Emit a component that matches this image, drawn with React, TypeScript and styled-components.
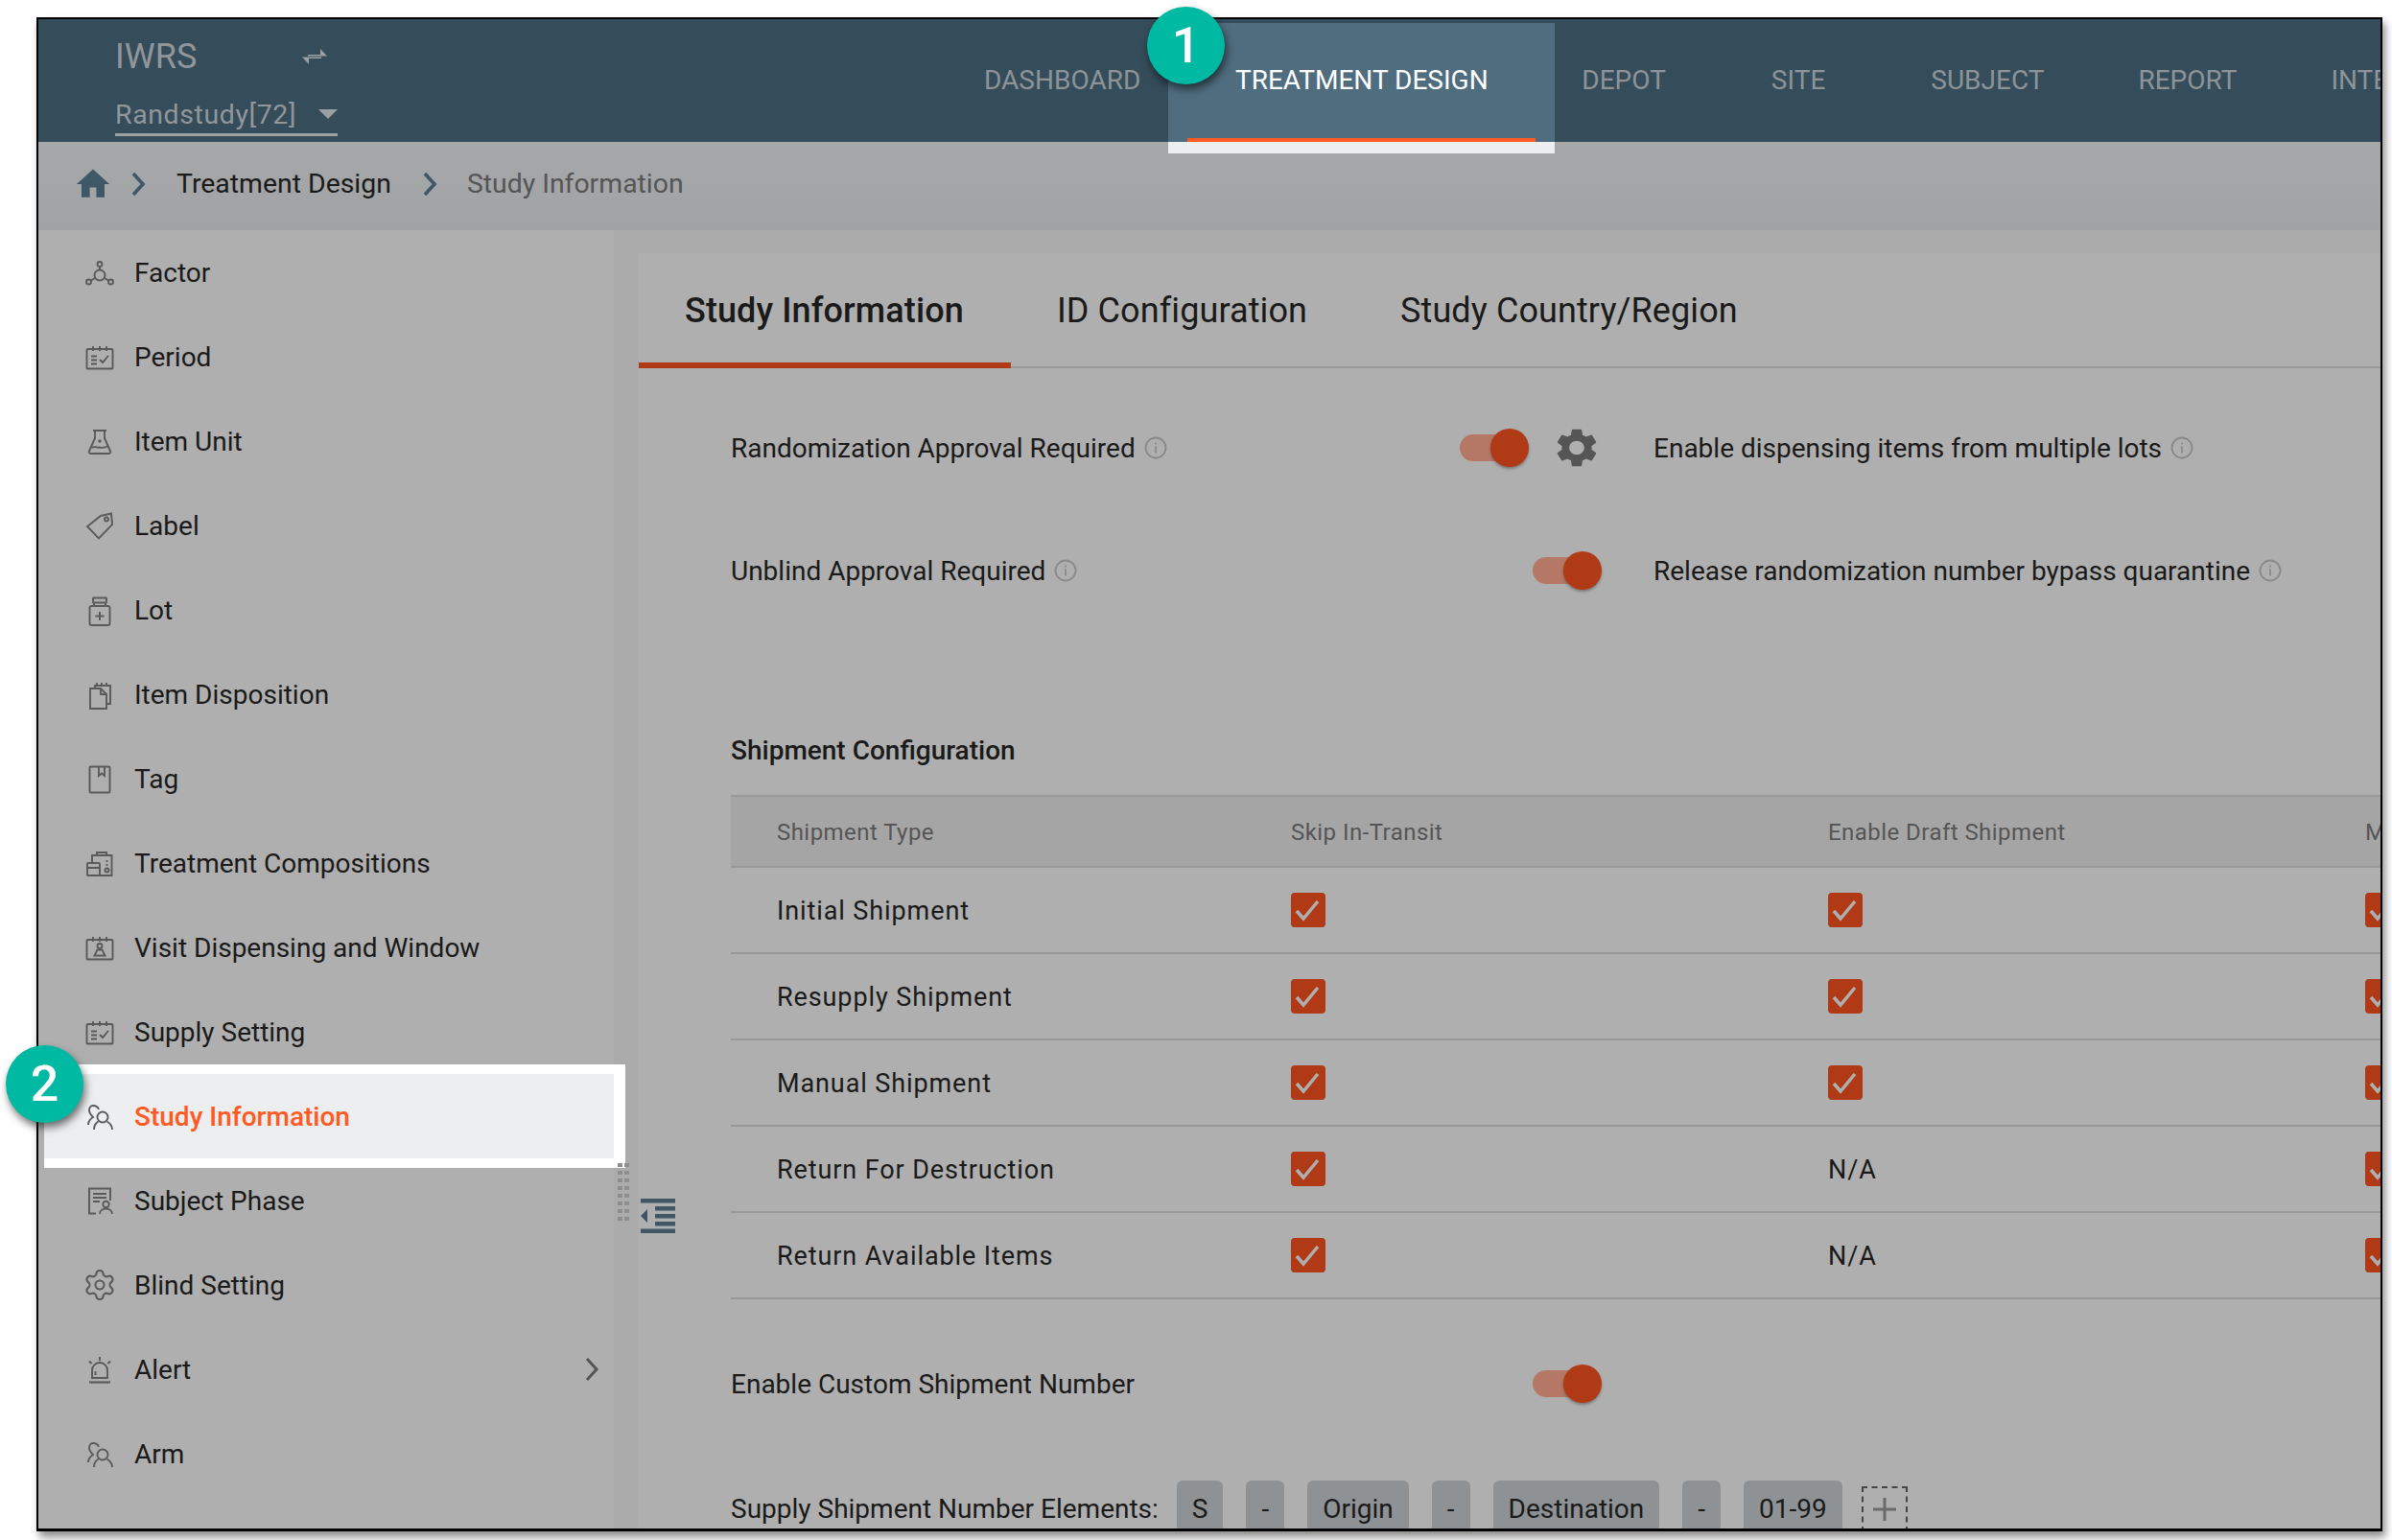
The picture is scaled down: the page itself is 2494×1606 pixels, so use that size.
import React from 'react';
import styled, { createGlobalStyle } from 'styled-components';
import { Settings } from 'lucide-react';

const GlobalStyle = createGlobalStyle`
  html, body {
    margin: 0;
    padding: 0;
    background: #fff;
    font-family: Roboto, "Liberation Sans", sans-serif;
  }
`;

const Stage = styled.div`
  position: relative;
  width: 2494px;
  height: 1606px;
  padding: 18px 0 0 38px;
  box-sizing: border-box;
  overflow: hidden;
`;

const Frame = styled.div`
  position: relative;
  width: 2446px;
  height: 1579px;
  box-sizing: border-box;
  border: 2px solid #000;
  border-bottom-width: 3px;
  box-shadow: 3px 6px 8px rgba(0, 0, 0, 0.45);
  overflow: hidden;
  display: flex;
  flex-direction: column;
  background: #afafaf;
`;

const Header = styled.header`
  position: relative;
  z-index: 3;
  flex: none;
  height: 128px;
  display: flex;
  background: #354c5a;
`;

const Brand = styled.div`
  flex: none;
  width: 986px;
  padding: 14px 0 0 80px;
  box-sizing: border-box;
`;

const BrandTop = styled.div`
  width: 221px;
  display: flex;
  align-items: center;
  justify-content: space-between;
  height: 50px;
`;

const BrandName = styled.span`
  font-size: 36px;
  color: #90969a;
`;

const StudySelect = styled.div`
  margin-top: 15px;
  width: 232px;
  height: 43px;
  display: flex;
  align-items: center;
  justify-content: space-between;
  border-bottom: 3px solid #9aa0a3;
  box-sizing: border-box;
  font-size: 28.5px;
  letter-spacing: 0.6px;
  color: #90969a;
`;

const Caret = styled.i`
  width: 0;
  height: 0;
  border-left: 10px solid transparent;
  border-right: 10px solid transparent;
  border-top: 10px solid #9aa0a3;
`;

const Nav = styled.nav`
  display: flex;
  align-items: stretch;
  flex: none;
`;

const NavItem = styled.div<{ $gap: number }>`
  margin-left: ${(p) => p.$gap}px;
  height: 124px;
  margin-top: 4px;
  padding-top: 32px;
  box-sizing: border-box;
  line-height: 56px;
  font-size: 28px;
  color: #8c9499;
  white-space: nowrap;
`;

const ActiveNavItem = styled(NavItem)`
  position: relative;
  width: 403px;
  text-align: center;
  background: #4f6d7f;
  color: #fff;

  &::before {
    content: '';
    position: absolute;
    left: 20px;
    right: 20px;
    bottom: 0;
    height: 4px;
    background: #ff5a23;
  }

  &::after {
    content: '';
    position: absolute;
    left: 0;
    right: 0;
    top: 100%;
    height: 12px;
    background: #edeef0;
  }
`;

const Breadcrumb = styled.div`
  flex: none;
  height: 92px;
  padding: 0 0 5px 39px;
  box-sizing: border-box;
  display: flex;
  align-items: center;
  background: linear-gradient(#a6a7a8, #a2a3a4);
  font-size: 28.4px;
  color: #1a1a1a;
`;

const Crumb = styled.span<{ $muted?: boolean }>`
  color: ${(p) => (p.$muted ? '#555' : '#1a1a1a')};
`;

const CrumbSep = styled.svg<{ $left: number; $right: number }>`
  flex: none;
  width: 16px;
  height: 24px;
  margin: 0 ${(p) => p.$right}px 0 ${(p) => p.$left}px;
`;

const Body = styled.div`
  position: relative;
  flex: 1;
  min-height: 0;
  display: flex;
`;

const Sidebar = styled.aside`
  position: relative;
  z-index: 2;
  flex: none;
  width: 600px;
  background: #afafaf;
`;

const SideRow = styled.div`
  height: 88px;
  display: flex;
  align-items: center;
  padding-left: 46px;
  font-size: 28px;
  color: #1a1a1a;
`;

const ActiveSideRow = styled(SideRow)`
  position: relative;
  margin-left: 6px;
  padding-left: 40px;
  background: #edeef0;
  color: #ff5a23;
  font-weight: 500;

  &::before {
    content: '';
    position: absolute;
    z-index: -1;
    left: 0;
    right: -12px;
    top: -10px;
    bottom: -10px;
    background: #fff;
  }
`;

const SideIcon = styled.svg`
  flex: none;
  width: 36px;
  height: 36px;
  margin-right: 18px;
  fill: none;
  stroke: #5a5a5a;
  stroke-width: 1.9;
`;

const GearOutline = styled(Settings)`
  flex: none;
  width: 36px;
  height: 36px;
  margin-right: 18px;
  color: #5a5a5a;
`;

const SideChevron = styled.svg`
  margin-left: auto;
  margin-right: 15px;
  width: 16px;
  height: 24px;
`;

const Main = styled.main`
  flex: 1;
  min-width: 0;
  padding: 24px 0 0 26px;
  background: #ababab;
`;

const Card = styled.section`
  height: 100%;
  background: #afafaf;
  overflow: hidden;
`;

const TabBar = styled.div`
  height: 120px;
  box-sizing: border-box;
  display: flex;
  border-bottom: 2px solid #999;
`;

const Tab = styled.div<{ $active?: boolean }>`
  height: 120px;
  box-sizing: border-box;
  padding: 0 49px 0 48px;
  line-height: 120px;
  font-size: 36px;
  letter-spacing: 0.1px;
  color: #1a1a1a;
  font-weight: ${(p) => (p.$active ? 500 : 400)};
  border-bottom: ${(p) => (p.$active ? '6px solid #b03a15' : 'none')};
  white-space: nowrap;
`;

const Content = styled.div`
  padding: 19px 0 0 96px;
`;

const SettingsGrid = styled.div`
  display: grid;
  grid-template-columns: 908px 1fr;
  column-gap: 54px;
  grid-auto-rows: 128px;
  align-items: center;
`;

const SettingCell = styled.div`
  display: flex;
  align-items: center;
`;

const Label = styled.span`
  font-size: 28px;
  color: #1a1a1a;
  white-space: nowrap;
`;

const Info = styled.svg`
  flex: none;
  width: 24px;
  height: 24px;
  margin-left: 9px;
  fill: none;
  stroke: #8a8a8a;
  stroke-width: 1.8;
`;

const Controls = styled.div`
  margin-left: auto;
  display: flex;
  align-items: center;
`;

const Toggle = styled.span`
  position: relative;
  display: block;
  width: 72px;
  height: 28px;

  &::before {
    content: '';
    position: absolute;
    left: 0;
    top: 0;
    width: 56px;
    height: 28px;
    border-radius: 14px;
    background: #b67866;
  }

  &::after {
    content: '';
    position: absolute;
    right: 0;
    top: -6px;
    width: 40px;
    height: 40px;
    border-radius: 50%;
    background: #b03a15;
    box-shadow: 0 2px 3px rgba(0, 0, 0, 0.3);
  }
`;

const SolidGear = styled.svg`
  width: 52px;
  height: 48px;
  margin: 0 0 0 24px;
  fill: #555;
`;

const SectionTitle = styled.div`
  margin-top: 104px;
  height: 40px;
  line-height: 40px;
  font-size: 28px;
  font-weight: 500;
  color: #1a1a1a;
`;

const Table = styled.div`
  margin-top: 26px;
`;

const TableRow = styled.div`
  height: 90px;
  box-sizing: border-box;
  display: grid;
  grid-template-columns: 584px 560px 560px 560px;
  align-items: center;
  border-bottom: 2px solid #999;
  font-size: 27px;
  letter-spacing: 0.9px;
  color: #1a1a1a;
`;

const TableHead = styled(TableRow)`
  height: 76px;
  border-top: 2px solid #999;
  background: #a5a5a5;
  font-size: 24px;
  letter-spacing: 0.45px;
  color: #555;
`;

const FirstCell = styled.div`
  padding: 2px 0 0 48px;
`;

const TextCell = styled.div`
  padding-top: 2px;
`;

const Check = styled.svg`
  display: block;
  width: 36px;
  height: 36px;
`;

const CustomRow = styled.div`
  margin-top: 68px;
  width: 908px;
  height: 40px;
  display: flex;
  align-items: center;
`;

const ElementsRow = styled.div`
  margin-top: 81px;
  display: flex;
  align-items: flex-start;
  gap: 24px;
`;

const ElementsLabel = styled(Label)`
  line-height: 60px;
  margin-right: -5px;
`;

const Chip = styled.span`
  height: 60px;
  padding: 0 16px;
  text-align: center;
  line-height: 60px;
  border-radius: 6px;
  background: #8e9294;
  font-size: 28px;
  color: #1a1a1a;
`;

const AddChip = styled.span`
  width: 48px;
  height: 48px;
  margin: 6px 0 0 -4px;
  box-sizing: border-box;
  border: 2px dashed #444;
  display: flex;
  align-items: center;
  justify-content: center;
`;

const ResizeDots = styled.svg`
  position: absolute;
  left: 604px;
  top: 973px;
  z-index: 3;
  width: 12px;
  height: 60px;
`;

const CollapseIcon = styled.svg`
  position: absolute;
  left: 628px;
  top: 1010px;
  z-index: 3;
  width: 36px;
  height: 36px;
`;

const Badge = styled.div<{ $x: number; $y: number }>`
  position: absolute;
  left: ${(p) => p.$x}px;
  top: ${(p) => p.$y}px;
  z-index: 5;
  width: 81px;
  height: 81px;
  border-radius: 50%;
  background: #00b9a2;
  box-shadow: 2px 5px 8px rgba(0, 0, 0, 0.55);
  color: #fff;
  font-size: 52px;
  font-weight: 500;
  line-height: 81px;
  text-align: center;
`;

const navItems = [
  { name: 'DEPOT', gap: 28 },
  { name: 'SITE', gap: 110 },
  { name: 'SUBJECT', gap: 110 },
  { name: 'REPORT', gap: 98 },
  { name: 'INTEGRATION', gap: 98 },
];

const ticks = (
  <>
    <path d="M11 7v5M18 7v5M25 7v5" />
  </>
);

const PeopleIcon = () => (
  <SideIcon viewBox="0 0 36 36">
    <circle cx="21" cy="19" r="5.500" />
    <path d="M12 32c0-4 2-7 4.500-8.500M25.500 23.500C28 25 31 28 31 32" />
    <path d="M17 11c-1-3-4-4-6-4-3 0-4 3-4 5 0 3 2 5 4 7-3 2-5 5-5 8" />
  </SideIcon>
);

const icons: Record<string, React.ReactNode> = {
  Factor: (
    <SideIcon viewBox="0 0 36 36">
      <circle cx="18" cy="9.500" r="2.500" />
      <circle cx="18" cy="21" r="5.500" />
      <circle cx="6.500" cy="28" r="2.500" />
      <circle cx="29.500" cy="28" r="2.500" />
      <path d="M18 12v3.500M8.700 26.700l4.600-3M27.300 26.700l-4.600-3" />
    </SideIcon>
  ),
  Period: (
    <SideIcon viewBox="0 0 36 36">
      <rect x="4.500" y="10" width="27" height="20.500" rx="1" />
      {ticks}
      <path d="M9 17.500h6M9 21.500h6M9 25.500h6M18 21l3 3 6-7" />
    </SideIcon>
  ),
  'Item Unit': (
    <SideIcon viewBox="0 0 36 36">
      <path d="M11 7h14M13 7v8L7 28.500c-.5 1.200.3 2.500 1.500 2.500h19c1.200 0 2-1.300 1.500-2.500L23 15V7" />
      <path d="M10 25c4-3 8 2.500 16-1.500" />
      <circle cx="18" cy="18" r=".8" />
    </SideIcon>
  ),
  Label: (
    <SideIcon viewBox="0 0 36 36">
      <path d="M19 8l11-2.500 1 11.500-14 14.500L5 19z" />
      <circle cx="25" cy="11.500" r="2" />
    </SideIcon>
  ),
  Lot: (
    <SideIcon viewBox="0 0 36 36">
      <rect x="11" y="5.500" width="14" height="5" rx=".5" />
      <path d="M12 10.500v3.500M24 10.500v3.500" />
      <rect x="7.500" y="14" width="21" height="20" rx="2" />
      <path d="M18 20v9M13.500 24.500h9" />
    </SideIcon>
  ),
  'Item Disposition': (
    <SideIcon viewBox="0 0 36 36">
      <path d="M13 12V9h16v19h-4M15 6v4M20 6v4M25 6v4" />
      <path d="M8 12h11l6 6v15H8zM19 12v6h6" />
    </SideIcon>
  ),
  Tag: (
    <SideIcon viewBox="0 0 36 36">
      <rect x="7.500" y="5.500" width="21" height="27" rx="1" />
      <path d="M17 5.500V15l3-2.500 3 2.500V5.500" />
    </SideIcon>
  ),
  'Treatment Compositions': (
    <SideIcon viewBox="0 0 36 36">
      <path d="M10 18v-8h20.500v21H18" />
      <path d="M15 10V7h10v3" />
      <rect x="5" y="18" width="13" height="13" rx="1" />
      <path d="M5 23h13M25.500 15v2M25.500 19v2" />
      <circle cx="25.500" cy="25.500" r="2" />
    </SideIcon>
  ),
  'Visit Dispensing and Window': (
    <SideIcon viewBox="0 0 36 36">
      <rect x="4.500" y="10" width="27" height="20.500" rx="1" />
      {ticks}
      <circle cx="18" cy="16.500" r="2.500" />
      <path d="M12.500 26.500h11l-3-6h-5z" />
    </SideIcon>
  ),
  'Subject Phase': (
    <SideIcon viewBox="0 0 36 36">
      <path d="M29 18V5.500H7v26h7" />
      <path d="M11 11h14M11 15h14M11 19h7" />
      <circle cx="24.500" cy="22" r="3.200" />
      <path d="M18 32c0-3.500 3-5.500 6.500-5.500s6.500 2 6.500 5.500" />
    </SideIcon>
  ),
  Alert: (
    <SideIcon viewBox="0 0 36 36">
      <path d="M10 27v-8a8 8 0 0 1 16 0v8z" />
      <path d="M13.500 24v-4M18 5v4M7 9.500L9.500 12M29 9.500L26.500 12" />
      <path d="M7 31.500h22" strokeWidth="2.200" />
    </SideIcon>
  ),
};
icons['Supply Setting'] = icons.Period;
icons['Study Information'] = <PeopleIcon />;
icons.Arm = <PeopleIcon />;
icons['Blind Setting'] = <GearOutline strokeWidth={1.4} />;

const sideItems = [
  'Factor',
  'Period',
  'Item Unit',
  'Label',
  'Lot',
  'Item Disposition',
  'Tag',
  'Treatment Compositions',
  'Visit Dispensing and Window',
  'Supply Setting',
  'Study Information',
  'Subject Phase',
  'Blind Setting',
  'Alert',
  'Arm',
];

const shipments = [
  { name: 'Initial Shipment', draft: true },
  { name: 'Resupply Shipment', draft: true },
  { name: 'Manual Shipment', draft: true },
  { name: 'Return For Destruction', draft: false },
  { name: 'Return Available Items', draft: false },
];

const elements = ['S', '-', 'Origin', '-', 'Destination', '-', '01-99'];

const InfoIcon = () => (
  <Info viewBox="0 0 24 24">
    <circle cx="12" cy="12" r="10.500" />
    <path d="M12 10.500v7M12 6.500v2" />
  </Info>
);

const CheckBox = () => (
  <Check viewBox="0 0 36 36">
    <rect width="36" height="36" rx="4" fill="#b03a15" />
    <path d="M6 19l7 8L28 9" fill="none" stroke="#afafaf" strokeWidth="3.500" />
  </Check>
);

const Chevron = ({ color, width = 3 }: { color: string; width?: number }) => (
  <path d="M3 1l10 11L3 23" fill="none" stroke={color} strokeWidth={width} />
);

export default function App() {
  return (
    <Stage>
      <GlobalStyle />
      <Frame>
        <Header>
          <Brand>
            <BrandTop>
              <BrandName>IWRS</BrandName>
              <svg width="26" height="20" viewBox="0 0 26 20" fill="#9aa0a3">
                <path d="M6 8h13V2l7 7.500H6zM20 12H7v6L0 10.500h20z" />
              </svg>
            </BrandTop>
            <StudySelect>
              Randstudy[72]
              <Caret />
            </StudySelect>
          </Brand>
          <Nav>
            <NavItem $gap={0}>DASHBOARD</NavItem>
            <ActiveNavItem $gap={29}>TREATMENT DESIGN</ActiveNavItem>
            {navItems.map((item) => (
              <NavItem key={item.name} $gap={item.gap}>{item.name}</NavItem>
            ))}
          </Nav>
        </Header>
        <Breadcrumb>
          <svg width="36" height="36" viewBox="1.500 2 21 20" fill="#3f5868">
            <path d="M10 20v-6h4v6h5v-8h3L12 3 2 12h3v8z" />
          </svg>
          <CrumbSep $left={21} $right={32} viewBox="0 0 16 24"><Chevron color="#3f5868" width={3.6} /></CrumbSep>
          <Crumb>Treatment Design</Crumb>
          <CrumbSep $left={32} $right={31} viewBox="0 0 16 24"><Chevron color="#3f5868" width={3.6} /></CrumbSep>
          <Crumb $muted>Study Information</Crumb>
        </Breadcrumb>
        <Body>
          <Sidebar>
            {sideItems.map((name) => {
              const Row = name === 'Study Information' ? ActiveSideRow : SideRow;
              return (
                <Row key={name}>
                  {icons[name]}
                  {name}
                  {name === 'Alert' && (
                    <SideChevron viewBox="0 0 16 24"><Chevron color="#555" /></SideChevron>
                  )}
                </Row>
              );
            })}
          </Sidebar>
          <ResizeDots viewBox="0 0 12 60" fill="#8e8e8e">
            {[0, 8, 16, 24, 32, 40, 48, 56].map((y) => (
              <path key={y} d={`M0 ${y}h5v4H0zM7 ${y}h5v4H7z`} />
            ))}
          </ResizeDots>
          <CollapseIcon viewBox="0 0 36 36" fill="#3f5563">
            <path d="M0 0h36v4.500H0zM15 8h21v4.500H15zM15 16h21v4.500H15zM15 24h21v4.500H15zM0 31.500h36V36H0zM7 11v14L0 18z" />
          </CollapseIcon>
          <Main>
            <Card>
              <TabBar>
                <Tab $active>Study Information</Tab>
                <Tab>ID Configuration</Tab>
                <Tab>Study Country/Region</Tab>
              </TabBar>
              <Content>
                <SettingsGrid>
                  <SettingCell>
                    <Label>Randomization Approval Required</Label>
                    <InfoIcon />
                    <Controls>
                      <Toggle />
                      <SolidGear viewBox="0 0 24 24" preserveAspectRatio="none">
                        <path d="M19.140 12.940c.04-.3.060-.61.060-.94 0-.32-.02-.64-.07-.94l2.030-1.580c.18-.14.230-.41.120-.61l-1.920-3.320c-.12-.22-.37-.29-.59-.22l-2.390.96c-.5-.38-1.030-.7-1.620-.94l-.36-2.540c-.04-.24-.24-.41-.48-.41h-3.840c-.24 0-.43.170-.47.410l-.36 2.540c-.59.240-1.130.570-1.620.94l-2.390-.96c-.22-.08-.47 0-.59.220L2.740 8.870c-.12.210-.08.470.120.610l2.030 1.580c-.05.3-.09.630-.09.940s.02.640.07.940l-2.030 1.580c-.18.140-.23.410-.12.610l1.920 3.320c.12.220.37.290.59.220l2.390-.96c.5.380 1.030.7 1.620.94l.36 2.540c.05.240.24.410.48.410h3.840c.24 0 .44-.17.470-.41l.36-2.540c.59-.24 1.130-.56 1.620-.94l2.390.96c.22.080.47 0 .59-.22l1.920-3.320c.12-.22.070-.47-.12-.61l-2.010-1.580zM12 15.600c-1.980 0-3.600-1.620-3.600-3.600s1.620-3.600 3.600-3.600 3.600 1.620 3.600 3.600-1.620 3.600-3.600 3.600z" />
                      </SolidGear>
                    </Controls>
                  </SettingCell>
                  <SettingCell>
                    <Label>Enable dispensing items from multiple lots</Label>
                    <InfoIcon />
                  </SettingCell>
                  <SettingCell>
                    <Label>Unblind Approval Required</Label>
                    <InfoIcon />
                    <Controls>
                      <Toggle />
                    </Controls>
                  </SettingCell>
                  <SettingCell>
                    <Label>Release randomization number bypass quarantine</Label>
                    <InfoIcon />
                  </SettingCell>
                </SettingsGrid>
                <SectionTitle>Shipment Configuration</SectionTitle>
                <Table>
                  <TableHead>
                    <FirstCell>Shipment Type</FirstCell>
                    <TextCell>Skip In-Transit</TextCell>
                    <TextCell>Enable Draft Shipment</TextCell>
                    <TextCell>M</TextCell>
                  </TableHead>
                  {shipments.map((row) => (
                    <TableRow key={row.name}>
                      <FirstCell>{row.name}</FirstCell>
                      <div><CheckBox /></div>
                      {row.draft ? <div><CheckBox /></div> : <TextCell>N/A</TextCell>}
                      <div><CheckBox /></div>
                    </TableRow>
                  ))}
                </Table>
                <CustomRow>
                  <Label>Enable Custom Shipment Number</Label>
                  <Controls>
                    <Toggle />
                  </Controls>
                </CustomRow>
                <ElementsRow>
                  <ElementsLabel>Supply Shipment Number Elements:</ElementsLabel>
                  {elements.map((el, i) => (
                    <Chip key={i}>{el}</Chip>
                  ))}
                  <AddChip>
                    <svg width="24" height="24" viewBox="0 0 24 24" stroke="#6b6b6b" strokeWidth="3">
                      <path d="M12 0v24M0 12h24" />
                    </svg>
                  </AddChip>
                </ElementsRow>
              </Content>
            </Card>
          </Main>
        </Body>
      </Frame>
      <Badge $x={1196} $y={7}>1</Badge>
      <Badge $x={6} $y={1090}>2</Badge>
    </Stage>
  );
}
